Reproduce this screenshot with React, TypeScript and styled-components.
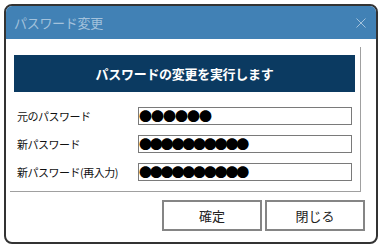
import React from "react";
import styled, { createGlobalStyle } from "styled-components";

const Global = createGlobalStyle`
  html, body { margin: 0; padding: 0; background: #ffffff; }
  body { font-family: "Noto Sans CJK JP", "Noto Sans", sans-serif; }
`;

const Window = styled.div`
  margin: 4px 0 0 4px;
  width: 374px;
  height: 240px;
  box-sizing: border-box;
  border: 2px solid #333333;
  border-radius: 8px;
  overflow: hidden;
  display: flex;
  flex-direction: column;
  background: #ffffff;
`;

const TitleBar = styled.div`
  height: 33px;
  background: #4181b5;
  display: flex;
  align-items: center;
  justify-content: space-between;
  padding: 0 10px 0 8px;
  flex-shrink: 0;
`;

const Title = styled.span`
  color: #a3c2dc;
  font-size: 13px;
  letter-spacing: -0.3px;
`;

const CloseIcon = styled.svg`
  width: 10px;
  height: 10px;
`;

const Body = styled.div`
  flex: 1;
  display: flex;
  flex-direction: column;
  padding: 8px 0 0 4px;
`;

const Panel = styled.div`
  width: 351px;
  box-sizing: border-box;
  border-right: 1px solid #a0a0a0;
  border-bottom: 1px solid #a0a0a0;
  padding: 8px 4px 10px 4px;
  display: flex;
  flex-direction: column;
`;

const Banner = styled.div`
  height: 37px;
  width: 341px;
  background: #0b3a61;
  color: #ffffff;
  font-weight: bold;
  font-size: 13px;
  letter-spacing: -0.3px;
  display: flex;
  align-items: center;
  justify-content: center;
  margin-bottom: 15px;
`;

const Rows = styled.div`
  display: flex;
  flex-direction: column;
  gap: 10px;
`;

const Row = styled.div`
  display: flex;
  align-items: center;
  height: 18px;
`;

const Label = styled.span`
  width: 121px;
  padding-left: 3px;
  font-size: 11px;
  color: #111111;
  letter-spacing: -0.5px;
  white-space: nowrap;
`;

const Field = styled.div`
  width: 214px;
  height: 18px;
  box-sizing: border-box;
  border: 1px solid #7a7a7a;
  display: flex;
  align-items: center;
  padding-left: 0;
  overflow: hidden;
`;

const Mask = styled.span<{ $pitch: number }>`
  font-family: "Noto Sans CJK JP", sans-serif;
  font-size: 13px;
  line-height: 16px;
  letter-spacing: ${(p) => p.$pitch - 13}px;
  color: #000000;
`;

const ButtonBar = styled.div`
  display: flex;
  justify-content: flex-end;
  gap: 3px;
  padding: 8px 11px 0 0;
`;

const Button = styled.button`
  width: 100px;
  height: 31px;
  box-sizing: border-box;
  border: 2px solid #858585;
  background: #ffffff;
  font-family: "Noto Sans CJK JP", sans-serif;
  font-size: 13px;
  color: #222222;
  padding: 0;
`;

const fields = [
  { label: "元のパスワード", count: 6, pitch: 12 },
  { label: "新パスワード", count: 10, pitch: 10.8 },
  { label: "新パスワード(再入力)", count: 10, pitch: 10.8 },
];

export default function App() {
  return (
    <>
      <Global />
      <Window>
        <TitleBar>
          <Title>パスワード変更</Title>
          <CloseIcon viewBox="0 0 10 10">
            <path d="M0.5 0.5 L9.5 9.5 M9.5 0.5 L0.5 9.5" stroke="#a3c2dc" strokeWidth="1" fill="none" />
          </CloseIcon>
        </TitleBar>
        <Body>
          <Panel>
            <Banner>パスワードの変更を実行します</Banner>
            <Rows>
              {fields.map((f) => (
                <Row key={f.label}>
                  <Label>{f.label}</Label>
                  <Field>
                    <Mask $pitch={f.pitch}>{"●".repeat(f.count)}</Mask>
                  </Field>
                </Row>
              ))}
            </Rows>
          </Panel>
          <ButtonBar>
            <Button>確定</Button>
            <Button>閉じる</Button>
          </ButtonBar>
        </Body>
      </Window>
    </>
  );
}
